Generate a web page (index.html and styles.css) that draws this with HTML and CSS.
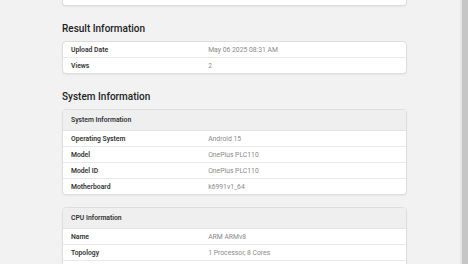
FILE: index.html
```html
<!DOCTYPE html>
<html lang="en">
<head>
<meta charset="utf-8">
<title>Result Information</title>
<link rel="stylesheet" href="styles.css">
</head>
<body>
<div class="page">
  <main class="content">
    <div class="card card-tail"></div>

    <h2 class="section-title">Result Information</h2>
    <div class="card">
      <div class="row"><span class="label">Upload Date</span><span class="value">May 06 2025 08:31 AM</span></div>
      <div class="row"><span class="label">Views</span><span class="value">2</span></div>
    </div>

    <h2 class="section-title">System Information</h2>
    <div class="card">
      <div class="row row-head"><span class="label">System Information</span></div>
      <div class="row"><span class="label">Operating System</span><span class="value">Android 15</span></div>
      <div class="row"><span class="label">Model</span><span class="value">OnePlus PLC110</span></div>
      <div class="row"><span class="label">Model ID</span><span class="value">OnePlus PLC110</span></div>
      <div class="row"><span class="label">Motherboard</span><span class="value">k6991v1_64</span></div>
    </div>

    <div class="card card-gap">
      <div class="row row-head"><span class="label">CPU Information</span></div>
      <div class="row"><span class="label">Name</span><span class="value">ARM ARMv8</span></div>
      <div class="row"><span class="label">Topology</span><span class="value">1 Processor, 8 Cores</span></div>
      <div class="row"></div>
    </div>
  </main>
  <div class="scrollbar"><div class="scroll-edge"></div><div class="scroll-thumb"></div></div>
</div>
</body>
</html>
```

FILE: styles.css
```css
html, body {
  margin: 0;
  padding: 0;
  height: 100%;
  overflow: hidden;
}

body {
  background: #f2f2f2;
  font-family: Roboto, "Liberation Sans", sans-serif;
  color: #333;
}

.page {
  display: flex;
  height: 264px;
}

.content {
  flex: 1;
  padding: 0 0 0 62px;
}

.content > * {
  width: 345px;
}

.card {
  background: #fff;
  border: 1px solid #dedede;
  border-radius: 4px;
  box-shadow: 0 1px 2px rgba(0, 0, 0, 0.05);
  overflow: hidden;
  box-sizing: border-box;
}

.card-tail {
  height: 6px;
  border-top: none;
  border-radius: 0 0 4px 4px;
}

.card-gap {
  margin-top: 12px;
}

.section-title {
  margin: 16px 0 5px;
  font-size: 10px;
  line-height: 14px;
  font-weight: 500;
  color: #222;
}

.row {
  display: flex;
  height: 15px;
  align-items: center;
  font-size: 6.8px;
  border-top: 1px solid #e9e9e9;
}

.row:first-child {
  border-top: none;
}

.row-head {
  height: 20px;
  background: #efefef;
}

.row-head + .row {
  border-top-color: #e4e4e4;
}

.label {
  width: 40%;
  padding-left: 8px;
  box-sizing: border-box;
  font-weight: 600;
  color: #333;
  white-space: nowrap;
}

.value {
  flex: 1;
  padding-left: 8px;
  color: #8a8a8a;
  white-space: nowrap;
  overflow: hidden;
}

.scrollbar {
  display: flex;
  width: 8px;
  height: 100%;
}

.scroll-edge {
  width: 2px;
  background: #e6e6e6;
}

.scroll-thumb {
  flex: 1;
  background: #c6c6c6;
}
```
